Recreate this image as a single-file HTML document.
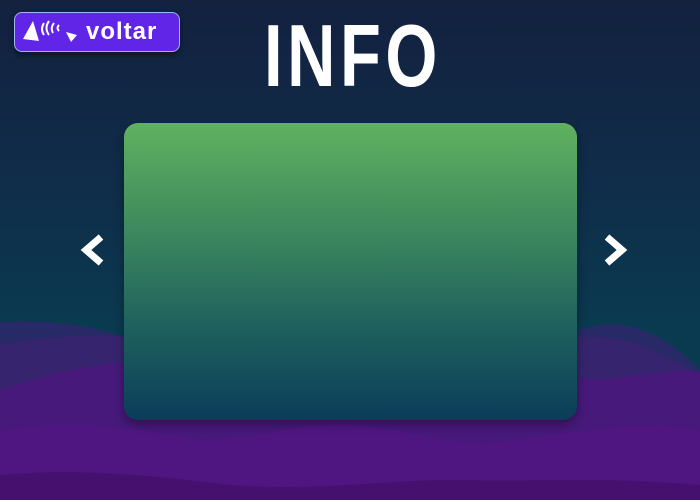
<!DOCTYPE html>
<html><head><style>
html,body{margin:0;padding:0}
body{width:700px;height:500px;overflow:hidden;position:relative;background:linear-gradient(180deg,#13213f 0%,#0f2e4a 40%,#0a3a50 65%,#0a3a50 100%);font-family:"Liberation Sans",sans-serif}
.logo{position:absolute;left:14px;top:12px;width:164px;height:38px;background:#6025e6;border:1.5px solid #9fb6f0;border-radius:8px;box-shadow:0 3px 6px rgba(0,0,0,.4)}
.logo span{position:absolute;left:71px;top:5px;color:#fff;font-size:24px;font-weight:bold;letter-spacing:1px;font-family:"Liberation Sans",sans-serif}
.title{position:absolute;left:240px;top:6px;width:200px;text-align:center;color:#fff;font-weight:bold;font-size:88px;line-height:100px;transform:scaleX(.76);transform-origin:center;letter-spacing:6px}
.card{position:absolute;left:124px;top:123px;width:453px;height:297px;border-radius:14px;background:linear-gradient(180deg,#60b160 0%,#3f8a5e 35%,#1d5f5d 70%,#0b3d5a 100%);box-shadow:0 4px 10px rgba(0,0,0,.35)}
svg.bg{position:absolute;left:0;top:0}
</style></head><body>
<svg class="bg" width="700" height="500" viewBox="0 0 700 500">
<path d="M0 322 C60 318 110 330 130 340 L580 330 C620 315 660 330 700 370 L700 500 L0 500Z" fill="#272a66"/>
<path d="M0 345 C60 335 120 330 160 345 L560 340 C610 330 650 345 700 375 L700 500 L0 500Z" fill="#37246e"/>
<path d="M0 390 C60 370 100 360 200 360 L600 380 C640 375 670 370 700 372 L700 500 L0 500Z" fill="#46197a"/>
<path d="M0 430 C60 420 120 425 200 440 C260 440 300 420 360 425 C420 432 460 450 520 440 C580 430 640 420 700 430 L700 500 L0 500Z" fill="#4f1682"/>
<path d="M0 475 C80 468 150 475 230 485 C320 492 400 478 470 480 C540 482 600 476 700 485 L700 500 L0 500Z" fill="#46106e"/>
<polyline points="101,237 86,250 101,263" fill="none" stroke="#fff" stroke-width="7" stroke-linejoin="miter"/>
<polyline points="607,237 622,250 607,263" fill="none" stroke="#fff" stroke-width="7" stroke-linejoin="miter"/>
</svg>
<div class="card"></div>
<div class="logo">
<svg width="70" height="38" style="position:absolute;left:0;top:0">
<path d="M8 26 L18 8 L24 28 Z" fill="#fff"/>
<path d="M29 10 Q25 16 29 22 M34 8 Q29 15 34 22 M39 10 Q35 15 38 20 M44 12 Q41 15 44 18" stroke="#fff" stroke-width="2" fill="none"/>
<path d="M51 19 L62 22 L56 29Z" fill="#fff"/>
</svg>
<span>voltar</span>
</div>
<div class="title">INFO</div>
</body></html>
